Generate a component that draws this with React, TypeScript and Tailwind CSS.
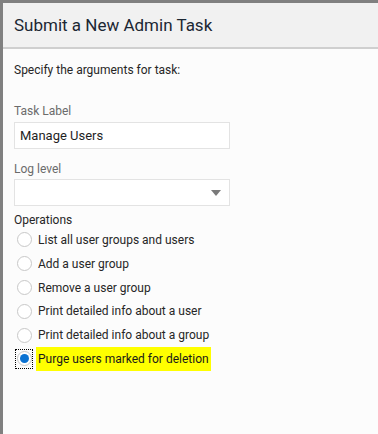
import React from "react";

const ops = [
  "List all user groups and users",
  "Add a user group",
  "Remove a user group",
  "Print detailed info about a user",
  "Print detailed info about a group",
  "Purge users marked for deletion",
];

function Radio({ checked }: { checked?: boolean }) {
  return (
    <span
      className={
        "flex h-[20px] w-[18px] shrink-0 items-center justify-center " +
        (checked ? "border border-dotted border-black" : "border border-transparent")
      }
    >
      <span className="flex h-[15px] w-[15px] items-center justify-center rounded-full border border-[#c8c8c8] bg-white">
        {checked && <span className="h-[9px] w-[9px] rounded-full bg-[#0a72d2]" />}
      </span>
    </span>
  );
}

export default function App() {
  return (
    <div className="h-[434px] w-[378px] overflow-hidden border-l-[3px] border-t-[3px] border-[#808080] bg-[#fcfcfc] text-[12px] text-[#262626] [font-family:Roboto,sans-serif]">
      <div className="flex h-[46px] items-center border-b-2 border-[#cfcfcf] bg-[#f1f1f1] pl-[11px]">
        <h1 className="text-[17px] leading-none text-[#1c2733]">Submit a New Admin Task</h1>
      </div>
      <div className="px-[11px] pt-[12px]">
        <p className="leading-[18px]">Specify the arguments for task:</p>
        <div className="mt-[24px] leading-[16px] text-[#6b6b6b]">Task Label</div>
        <div className="mt-[3px] flex h-[27px] w-[216px] items-center border border-[#e3e3e3] bg-white px-[5px] text-[13px] text-[#1f1f1f]">
          Manage Users
        </div>
        <div className="mt-[12px] leading-[16px] text-[#6b6b6b]">Log level</div>
        <div className="mt-[2px] flex h-[27px] w-[216px] items-center justify-end border border-[#e3e3e3] bg-white pr-[8px]">
          <svg width="10" height="6" viewBox="0 0 10 6">
            <path d="M0 0h10L5 6z" fill="#7a7a7a" />
          </svg>
        </div>
        <div className="mt-[6px] leading-[16px]">Operations</div>
        <div className="flex flex-col">
          {ops.map((o, i) => (
            <div key={o} className="flex h-[23.8px] items-center gap-[3px] pl-[1px]">
              <Radio checked={i === ops.length - 1} />
              <span
                className={
                  "px-[2px] leading-[24px] " + (i === ops.length - 1 ? "bg-[#ffff00] text-[#1a1a1a]" : "")
                }
              >
                {o}
              </span>
            </div>
          ))}
        </div>
      </div>
    </div>
  );
}
